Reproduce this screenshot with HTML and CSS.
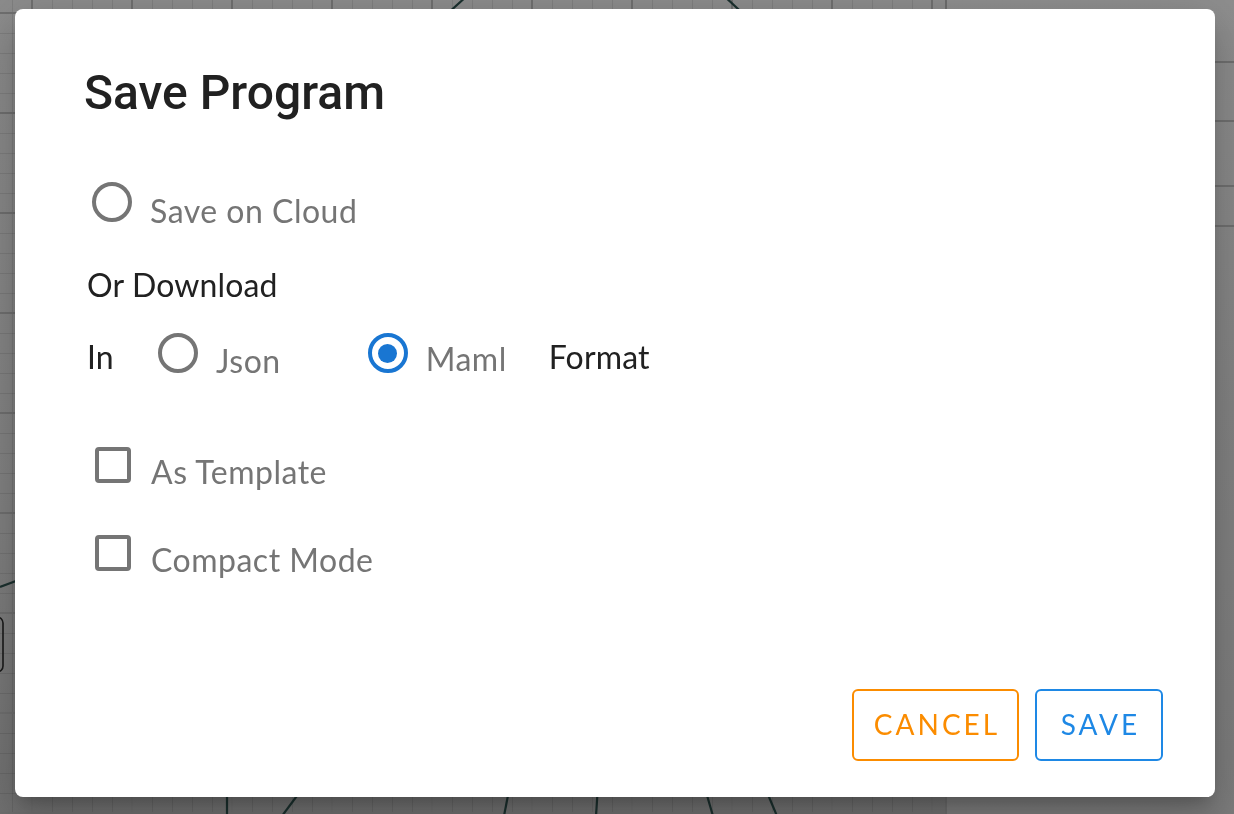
FILE: index.html
```html
<!DOCTYPE html>
<html lang="en">
<head>
<meta charset="utf-8">
<title>Save Program</title>
<link rel="stylesheet" href="styles.css">
</head>
<body>
<div class="app">
  <div class="canvas">
    <svg class="wires" width="945" height="814" viewBox="0 0 945 814">
      <g fill="none" stroke="#1b302e" stroke-width="2.2">
        <line x1="468" y1="-5" x2="436" y2="24"/>
        <line x1="722" y1="-6" x2="752" y2="22"/>
        <line x1="0" y1="587" x2="24" y2="578"/>
        <line x1="227" y1="780" x2="227" y2="814"/>
        <line x1="305" y1="785" x2="282" y2="816"/>
        <line x1="510" y1="785" x2="504" y2="816"/>
        <line x1="598" y1="785" x2="596" y2="816"/>
        <line x1="704" y1="785" x2="713" y2="816"/>
        <line x1="764" y1="785" x2="777" y2="816"/>
      </g>
      <rect x="-20" y="617" width="23" height="55" rx="6" fill="none" stroke="#1a1a1a" stroke-width="1.6"/>
    </svg>
  </div>
  <div class="panel">
    <div class="panel-row r1"></div>
    <div class="panel-row r2"></div>
    <div class="panel-row r3"></div>
    <div class="panel-row r4"></div>
  </div>
</div>

<div class="backdrop">
  <div class="dialog">
    <h2 class="title">Save Program</h2>
    <div class="body">
      <label class="option opt-cloud">
        <span class="radio"></span>
        <span class="opt-label">Save on Cloud</span>
      </label>
      <div class="text or-download">Or Download</div>
      <div class="format-row">
        <span class="text in-label">In</span>
        <label class="option opt-json">
          <span class="radio"></span>
          <span class="opt-label">Json</span>
        </label>
        <label class="option opt-maml">
          <span class="radio checked"></span>
          <span class="opt-label">Maml</span>
        </label>
        <span class="text format-label">Format</span>
      </div>
      <label class="option opt-template">
        <span class="checkbox"></span>
        <span class="opt-label">As Template</span>
      </label>
      <label class="option opt-compact">
        <span class="checkbox"></span>
        <span class="opt-label">Compact Mode</span>
      </label>
    </div>
    <div class="actions">
      <button class="btn btn-cancel">CANCEL</button>
      <button class="btn btn-save">SAVE</button>
    </div>
  </div>
</div>
</body>
</html>
```

FILE: styles.css
```css
html, body {
  margin: 0;
  padding: 0;
  width: 1234px;
  height: 814px;
  overflow: hidden;
}

body {
  font-family: "Lato", "Liberation Sans", sans-serif;
  background: #7c7c7c;
}

.app {
  display: flex;
  width: 1234px;
  height: 814px;
}

.canvas {
  flex: 0 0 945px;
  position: relative;
  background-color: #858585;
  background-image:
    linear-gradient(90deg, #6f6f6f 2px, transparent 2px),
    linear-gradient(180deg, #6f6f6f 2px, transparent 2px),
    linear-gradient(90deg, rgba(0,0,0,0.09) 1px, transparent 1px),
    linear-gradient(180deg, rgba(0,0,0,0.09) 1px, transparent 1px),
    linear-gradient(180deg, #8c8c8c 0%, #828282 60%, #717171 100%);
  background-size: 100px 100%, 100% 100px, 20px 100%, 100% 20px, 100% 100%;
  background-position: 31px 0, 0 12px, 12px 0, 0 13px, 0 0;
  border-right: 2px solid #6c6c6c;
}

.wires {
  position: absolute;
  left: 0;
  top: 0;
}

.panel {
  flex: 1;
  background: linear-gradient(180deg, #8e8e8e 0%, #838383 50%, #7c7c7c 100%);
  padding-top: 61px;
}

.panel-row {
  border-top: 2px solid #6f6f6f;
}
.panel-row.r1 { height: 57px; }
.panel-row.r2 { height: 63px; }
.panel-row.r3 { height: 38px; }

.backdrop {
  position: fixed;
  inset: 0;
  padding: 9px 0 0 15px;
  box-sizing: border-box;
}

.dialog {
  width: 1200px;
  height: 788px;
  box-sizing: border-box;
  background: #ffffff;
  border-radius: 8px;
  box-shadow: 0 11px 15px -7px rgba(0,0,0,0.2), 0 24px 38px 3px rgba(0,0,0,0.12), 0 9px 46px 8px rgba(0,0,0,0.1);
  padding: 56px 52px 36px 69px;
  display: flex;
  flex-direction: column;
}

.title {
  margin: 0;
  font-family: "Roboto", "Liberation Sans", sans-serif;
  font-weight: 500;
  font-size: 48px;
  line-height: 56px;
  color: #212121;
}

.body {
  padding-left: 3px;
  display: flex;
  flex-direction: column;
  align-items: flex-start;
  margin-top: 61px;
}

.option {
  display: flex;
  align-items: flex-start;
  gap: 18px;
  cursor: pointer;
}

.opt-label {
  font-size: 32px;
  line-height: 40px;
  margin-top: 7px;
  color: #757575;
  letter-spacing: 0.5px;
}

.text {
  font-size: 32px;
  line-height: 40px;
  color: #212121;
  letter-spacing: 0.15px;
}

.opt-cloud {
  margin-left: 5px;
}

.opt-cloud .opt-label {
  margin-top: 9px;
}

.or-download {
  margin-top: 34px;
}

.format-row {
  display: flex;
  align-items: flex-start;
  margin-top: 28px;
}

.in-label {
  margin-top: 4px;
  width: 71px;
}

.opt-json {
  margin-right: 87px;
}

.opt-json .opt-label {
  margin-top: 8px;
}

.opt-maml .opt-label {
  margin-top: 6px;
}

.format-label {
  margin-left: 42px;
  margin-top: 4px;
}

.opt-template {
  margin-left: 6px;
  margin-top: 64px;
}

.opt-compact {
  margin-left: 6px;
  margin-top: 41px;
}

.radio {
  flex: none;
  width: 40px;
  height: 40px;
  box-sizing: border-box;
  border: 4px solid #757575;
  border-radius: 50%;
  display: flex;
  align-items: center;
  justify-content: center;
}

.radio.checked {
  border-color: #1976d2;
}

.radio.checked::after {
  content: "";
  width: 19px;
  height: 19px;
  border-radius: 50%;
  background: #1976d2;
}

.checkbox {
  flex: none;
  width: 36px;
  height: 36px;
  margin: 2px;
  box-sizing: border-box;
  border: 4px solid #757575;
  border-radius: 4px;
}

.actions {
  margin-top: auto;
  display: flex;
  justify-content: flex-end;
  gap: 16px;
}

.btn {
  height: 72px;
  box-sizing: border-box;
  background: #ffffff;
  border-radius: 6px;
  border: 2px solid;
  font-family: "Lato", "Liberation Sans", sans-serif;
  font-size: 28px;
  font-weight: 400;
  letter-spacing: 3px;
  padding: 0 0 3px 3px;
  text-align: center;
  cursor: pointer;
}

.btn-cancel {
  width: 167px;
  color: #fb8c00;
  border-color: #fb8c00;
}

.btn-save {
  width: 128px;
  color: #1e88e5;
  border-color: #1e88e5;
}
```
